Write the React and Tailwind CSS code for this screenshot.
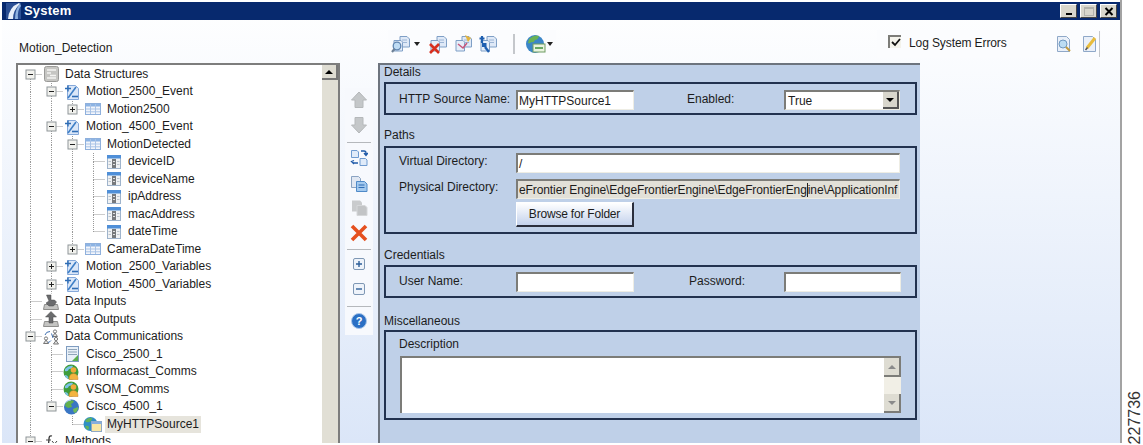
import React from "react";

const Sv = ({ w = 16, h = 16, children, className = "" }) => (
  <svg width={w} height={h} viewBox={`0 0 ${w} ${h}`} className={`shrink-0 ${className}`}>{children}</svg>
);

const DbIcon = () => (
  <Sv>
    <rect x="1.500" y="0.500" width="14" height="15" rx="2" fill="#c6c6c3" stroke="#9a9a98" />
    <path d="M4 4h9M4 7h4M7 9.500h6M4 12h9" stroke="#f4f4f2" strokeWidth="1.400" />
  </Sv>
);
const EventIcon = () => (
  <Sv>
    <path d="M3.500 1.500h8l3 3v11h-11z" fill="#dbe7f8" stroke="#86a9da" />
    <path d="M1 4.500h6M4 1.500v6" stroke="#2f6db5" strokeWidth="1.400" />
    <path d="M4 14L12 3" stroke="#3f7fc6" strokeWidth="1.600" />
    <path d="M8 12.500h6" stroke="#2f6db5" strokeWidth="1.600" />
  </Sv>
);
const TableIcon = () => (
  <Sv>
    <rect x="0.500" y="2.500" width="15" height="11" fill="#f2f5fb" stroke="#8fb0dc" />
    <rect x="1" y="3" width="14" height="2.500" fill="#8db4e4" />
    <path d="M1 8h14M1 10.800h14M5.500 3v10M10.500 3v10" stroke="#a9c3e6" />
  </Sv>
);
const FieldIcon = () => (
  <Sv>
    <rect x="1.500" y="1.500" width="13" height="13" fill="#f0f2f4" stroke="#9fb4cc" />
    <rect x="1" y="1" width="14" height="3.500" fill="#4f8fd8" />
    <rect x="6" y="5" width="4" height="9" fill="#77797c" />
    <path d="M7 7.500h2M7 10.500h2" stroke="#e2e2e2" />
    <path d="M2.500 7.500h2.500M11 7.500h2.500M2.500 10.500h2.500M11 10.500h2.500" stroke="#bcc4cc" />
  </Sv>
);
const TrayIcon = ({ up }) => (
  <Sv>
    <path d="M1.500 10.500h13l1 5H.5z" fill="#c4c4c2" stroke="#8e8e8c" />
    {up ? (
      <path d="M8 .5L2.500 6H6v6h4V6h3.500z" fill="#6a6b6d" stroke="#48494b" strokeWidth="0.500" />
    ) : (
      <path d="M3.500 1h4.500v5H11.500l2 2-3 4H6L3 9l3-2z" fill="#6a6b6d" stroke="#48494b" strokeWidth="0.500" />
    )}
  </Sv>
);
const CommsIcon = () => (
  <Sv w={18} h={16}>
    <circle cx="13" cy="2.500" r="1.600" fill="none" stroke="#777" />
    <path d="M10.500 7.500l2.500-3.500 2.500 3.500z" fill="#e6e6e6" stroke="#777" />
    <circle cx="4" cy="9.500" r="1.600" fill="none" stroke="#777" />
    <path d="M1.500 14.500L4 11l2.500 3.500z" fill="#e6e6e6" stroke="#777" />
    <circle cx="14" cy="10" r="1.600" fill="none" stroke="#777" />
    <path d="M11.500 15l2.500-3.500 2.500 3.500z" fill="#e6e6e6" stroke="#777" />
    <path d="M3 6Q4 2.500 8 2.500M9 11.500q-1 1.500-3 2M9.500 4.500L11 9" stroke="#3f6fb0" fill="none" />
  </Sv>
);
const ServerIcon = () => (
  <Sv>
    <rect x="2.500" y="0.500" width="12" height="15" fill="#e8f0f8" stroke="#7f9cc0" />
    <path d="M4 3.500h9M4 6h9M4 8.500h9" stroke="#8fa4b8" />
    <path d="M8 15l6-6v6z" fill="#5bb04d" />
  </Sv>
);
const PersonGlobe = () => (
  <Sv w={18} h={16}>
    <circle cx="8" cy="8" r="7.500" fill="#3f9c3a" />
    <path d="M2 5q4-4 8-3-1 3-4 3-1 3-4 2z" fill="#7cc2e8" />
    <path d="M1.500 11q4 0 4 4-3-1-4-4z" fill="#7cc2e8" />
    <circle cx="10.500" cy="6" r="2.800" fill="#f0a93a" />
    <path d="M6 15.500q0-6 4.500-6t4.500 6z" fill="#f3b440" stroke="#c87d20" strokeWidth="0.500" />
  </Sv>
);
const GlobeIcon = () => (
  <Sv w={18} h={16}>
    <circle cx="8.500" cy="8" r="7.500" fill="#3a76c4" />
    <path d="M4 2.500q4-2 7-.5-1 3-3 3l1 3-4 1-3-2q0-3 2-4.500z" fill="#62b04e" />
    <path d="M10 10l5-2q0 4-3 6-2-1-2-4z" fill="#6fbb58" />
    <path d="M2 4q3-3 6-3" stroke="#bcdcf5" fill="none" />
  </Sv>
);
const HttpIcon = () => (
  <Sv w={20} h={16}>
    <circle cx="7.500" cy="8" r="7" fill="#2f8fc4" />
    <path d="M2 5q3-4 7-3 0 3-3 4-2 1-4-1z" fill="#63b35a" />
    <path d="M2 10q3-1 4 1 0 2-1 3-2-1-3-4z" fill="#63b35a" />
    <rect x="8.500" y="5.500" width="10" height="10" fill="#f7e6a4" stroke="#8fa8c4" />
    <rect x="8.500" y="5.500" width="10" height="2.500" fill="#86aede" />
  </Sv>
);

const ICONS = {
  db: DbIcon, event: EventIcon, table: TableIcon, field: FieldIcon,
  in: () => <TrayIcon />, out: () => <TrayIcon up />, comms: CommsIcon,
  server: ServerIcon, person: PersonGlobe, globe: GlobeIcon, http: HttpIcon,
  fn: () => (
    <Sv>
      <path d="M9 2Q6 1 6 5L5.500 11Q5 15 2.500 14" stroke="#333" strokeWidth="1.300" fill="none" />
      <path d="M3 6h5M9 7l5 6M14 7l-5 6" stroke="#4a4a4a" fill="none" />
    </Sv>
  ),
};

const Guide = ({ kind }) => {
  const dot = { stroke: "#999999", strokeDasharray: "1 1" };
  const up = kind !== " " && kind !== "m";
  const down = kind === "I" || kind === "T" || kind === "M" || kind === "m" || kind === "P";
  const right = kind !== "I" && kind !== " ";
  const box = kind !== " " && "MmUPp".includes(kind);
  const plus = kind === "P" || kind === "p";
  return (
    <svg width="21" height="17.5" viewBox="0 0 21 17.5" className="shrink-0 overflow-visible">
      {up && <line x1="10.500" y1="0" x2="10.500" y2="9" {...dot} />}
      {down && <line x1="10.500" y1="9" x2="10.500" y2="17.500" {...dot} />}
      {right && <line x1="10.500" y1="8.500" x2="22" y2="8.500" {...dot} />}
      {box && (
        <g>
          <rect x="6" y="4" width="9" height="9" fill="#f2f2ee" stroke="#8f9699" />
          <line x1="8" y1="8.500" x2="13" y2="8.500" stroke="#222" />
          {plus && <line x1="10.500" y1="6" x2="10.500" y2="11" stroke="#222" />}
        </g>
      )}
    </svg>
  );
};

// I = through, T = branch, L = last branch, m = first root minus, M = minus with lines both ways,
// U = minus with line above only, P = plus with lines both ways, p = plus on a last child.
const ROWS = [
  ["m", "db", "Data Structures"],
  ["IM", "event", "Motion_2500_Event"],
  ["IIp", "table", "Motion2500"],
  ["IM", "event", "Motion_4500_Event"],
  ["IIM", "table", "MotionDetected"],
  ["IIIT", "field", "deviceID"],
  ["IIIT", "field", "deviceName"],
  ["IIIT", "field", "ipAddress"],
  ["IIIT", "field", "macAddress"],
  ["IIIL", "field", "dateTime"],
  ["IIp", "table", "CameraDateTime"],
  ["IP", "event", "Motion_2500_Variables"],
  ["IP", "event", "Motion_4500_Variables"],
  ["T", "in", "Data Inputs"],
  ["T", "out", "Data Outputs"],
  ["M", "comms", "Data Communications"],
  ["IT", "server", "Cisco_2500_1"],
  ["IT", "person", "Informacast_Comms"],
  ["IT", "person", "VSOM_Comms"],
  ["IU", "globe", "Cisco_4500_1"],
  ["I L", "http", "MyHTTPSource1", true],
  ["M", "fn", "Methods"],
];

const TreeRow = ({ guides, icon, label, selected }) => {
  const Icon = ICONS[icon];
  return (
    <div className="flex h-[17.5px] items-center">
      {guides.split("").map((g, i) => <Guide key={i} kind={g} />)}
      <span className="ml-[2px] flex w-[16px] justify-center"><Icon /></span>
      <span className={`ml-[4px] px-[2px] leading-[17px] whitespace-nowrap ${selected ? "bg-[#e6e4dc]" : ""}`}>{label}</span>
    </div>
  );
};

const DocPair = ({ variant }) => (
  <Sv w={20} h={20}>
    <path d="M9 2.500h7l2.500 2.500v8H9z" fill="#dfe9f7" stroke="#7f9fc6" />
    <path d="M3 6.500h7l1.500 1.500v9H3z" fill="#e6eef9" stroke="#7f9fc6" />
    <path d="M11 6h5M11 8.500h5" stroke="#9db6d6" />
    {variant === "search" && (
      <g>
        <circle cx="6" cy="12" r="3.800" fill="#bfdcf4" stroke="#5f85b0" strokeWidth="1.300" />
        <path d="M3.500 15L1 18" stroke="#6d8096" strokeWidth="2.200" />
      </g>
    )}
    {variant === "x" && <path d="M2 10l9 9M11 10l-9 9" stroke="#d8301f" strokeWidth="2.600" />}
    {variant === "mail" && (
      <g>
        <path d="M12 1l6 3-3 4z" fill="#e4b53e" />
        <path d="M5 10l5 4 4-5" stroke="#c7567a" strokeWidth="1.500" fill="none" />
      </g>
    )}
    {variant === "arrow" && (
      <g>
        <path d="M1.500 4.500h5M4 2v7" stroke="#1f5fb0" strokeWidth="2.200" />
        <path d="M7 13l4 5" stroke="#1f5fb0" strokeWidth="2.400" />
        <rect x="4" y="9" width="4.500" height="4" fill="#1f5fb0" />
      </g>
    )}
  </Sv>
);

const Caret = () => <span className="h-0 w-0 border-x-[3px] border-t-[4px] border-x-transparent border-t-[#222]" />;

const LinkGlobe = () => (
  <Sv w={21} h={20}>
    <circle cx="10" cy="10" r="9" fill="#3b86c8" />
    <path d="M4 5q5-5 10-3-1 4-4 4-1 3-4 2-1 2-3 1z" fill="#6ab255" />
    <rect x="8" y="10" width="12" height="8" fill="#e9f3df" stroke="#6f9c62" />
    <path d="M10 14h8" stroke="#3c8f3a" strokeWidth="1.500" />
  </Sv>
);

const SideItem = ({ h = "h-[25px]", children }) => (
  <div className={`flex ${h} items-center justify-center`}>{children}</div>
);
const SideSep = ({ className }) => <div className={`mx-[2px] h-[1px] bg-[#b5b8bc] ${className}`} />;

const SideToolbar = () => (
  <div className="ml-[5px] mt-[25px] h-[247px] w-[28px] shrink-0 bg-[#f7f9fd]">
    <SideItem h="h-[23px]">
      <Sv w={18} h={18}><path d="M9 1l7.500 8h-3.500v7.500H5V9H1.500z" fill="#c4c7c9" stroke="#b5b8ba" /></Sv>
    </SideItem>
    <SideItem h="h-[27px]">
      <Sv w={18} h={18}><path d="M9 17l7.500-8h-3.500V1.500H5V9H1.500z" fill="#c4c7c9" stroke="#b5b8ba" /></Sv>
    </SideItem>
    <SideSep className="mt-[4px]" />
    <SideItem h="h-[29px]">
      <Sv w={18} h={18}>
        <path d="M1.500 1.500h5.500l1.500 1.500v5.500h-7z" fill="#e0ebf9" stroke="#6f9bd0" />
        <path d="M10 9.500h5.500l1.500 1.500v5.500h-7z" fill="#e0ebf9" stroke="#6f9bd0" />
        <path d="M11 2h3q2 0 2 2v2M14 4l2 2.500L18 4" stroke="#1f5aa8" strokeWidth="1.300" fill="none" />
        <path d="M8 14H4q-2 0-2-2M4 11.500l-2.500 1L4 15" stroke="#1f5aa8" strokeWidth="1.300" fill="none" />
      </Sv>
    </SideItem>
    <SideItem h="h-[23px]">
      <Sv w={18} h={18}>
        <path d="M1.500 1.500h7l2 2v9h-9z" fill="#e0e7f2" stroke="#8aa3c2" />
        <path d="M6.500 6.500h8l2.500 2.500v7.500H6.500z" fill="#a3c9ee" stroke="#4f8ac8" />
        <path d="M8.500 10h6M8.500 12.500h6" stroke="#2f6db5" />
      </Sv>
    </SideItem>
    <SideItem>
      <Sv w={18} h={18}>
        <path d="M2 1.500h8l2 2v9H2z" fill="#c9cbcd" />
        <path d="M7 6.500h8l2 2v8H7z" fill="#c2c4c6" stroke="#d5d7d9" />
      </Sv>
    </SideItem>
    <SideItem>
      <Sv w={18} h={18}><path d="M2 2l14 14M16 2L2 16" stroke="#e5501f" strokeWidth="3.600" /></Sv>
    </SideItem>
    <SideSep className="mt-[4px]" />
    <SideItem h="h-[27px]">
      <Sv w={14} h={14}>
        <rect x="1.500" y="1.500" width="11" height="11" rx="1.500" fill="#eef3fa" stroke="#7f98b5" />
        <path d="M4 7h6M7 4v6" stroke="#2e5f99" strokeWidth="1.400" />
      </Sv>
    </SideItem>
    <SideItem h="h-[24px]">
      <Sv w={14} h={14}>
        <rect x="1.500" y="1.500" width="11" height="11" rx="1.500" fill="#eef3fa" stroke="#7f98b5" />
        <path d="M4 7h6" stroke="#2e5f99" strokeWidth="1.400" />
      </Sv>
    </SideItem>
    <SideSep className="mt-[5px]" />
    <SideItem h="h-[28px]">
      <svg width="16" height="16" viewBox="0 0 16 16">
        <circle cx="8" cy="8" r="7.500" fill="#2a6fc4" stroke="#a9c6ea" />
        <text x="8" y="12" textAnchor="middle" fontSize="11" fontWeight="700" fill="#fff" fontFamily="Liberation Sans">?</text>
      </svg>
    </SideItem>
  </div>
);

const Field = ({ w, disabled, children }) => (
  <div className={`flex h-[20px] ${w} shrink-0 items-center overflow-hidden whitespace-nowrap border-t-2 border-l-2 border-r border-b border-t-[#7c7c78] border-l-[#7c7c78] border-r-[#eeede4] border-b-[#eeede4] pl-px ${disabled ? "bg-[#e2e0d8]" : "bg-white"}`}>
    {children}
  </div>
);

const GroupLabel = ({ className = "h-[31px] pb-[2px]", children }) => (
  <div className={`flex ${className} items-end leading-[14px]`}>{children}</div>
);
const GroupBox = ({ className = "", children }) => (
  <div className={`w-[533px] border-2 border-[#22324f] ${className}`}>{children}</div>
);

const ScrollBtn = ({ up }) => (
  <div className="flex h-[19px] w-[17px] items-center justify-center border-r-2 border-b-2 border-r-[#7c7c78] border-b-[#7c7c78] bg-[#dedcd2]">
    <span className={`h-0 w-0 border-x-[4px] border-x-transparent ${up ? "border-b-[4px] border-b-[#8a8a8a]" : "border-t-[4px] border-t-[#8a8a8a]"}`} />
  </div>
);

const DetailsPanel = () => (
  <div className="ml-[5px] h-full w-[542px] shrink-0 border-t-2 border-l-2 border-[#6d747e] bg-[#bfd0e8] pl-[4px] text-[#1c1c1c]">
    <GroupLabel className="h-[17px] pb-[3px]">Details</GroupLabel>
    <GroupBox className="h-[33px]">
      <div className="flex items-center pl-[13px] pt-[6px]">
        <span className="w-[117px] pb-[2px] leading-[14px]">HTTP Source Name:</span>
        <Field w="w-[118px]">MyHTTPSource1</Field>
        <span className="ml-[53px] w-[97px] pb-[2px] leading-[14px]">Enabled:</span>
        <Field w="w-[116px]">
          <span className="flex-1 pl-[1px] pt-[1px]">True</span>
          <span className="flex h-[17px] w-[16px] items-center justify-center border-r-2 border-b-2 border-r-[#555] border-b-[#555] bg-[#d8d6cc]">
            <span className="h-0 w-0 border-x-[4px] border-t-[4px] border-x-transparent border-t-black" />
          </span>
        </Field>
      </div>
    </GroupBox>

    <GroupLabel className="h-[31px] pb-[4px]">Paths</GroupLabel>
    <GroupBox className="h-[88px]">
      <div className="flex items-center pl-[13px] pt-[5px]">
        <span className="w-[117px] pb-[4px] leading-[14px]">Virtual Directory:</span>
        <Field w="w-[384px]">/</Field>
      </div>
      <div className="mt-[6px] flex items-center pl-[13px]">
        <span className="w-[117px] pb-[4px] leading-[14px]">Physical Directory:</span>
        <Field w="w-[384px]" disabled>
          <span className="tracking-[-0.1px]">eFrontier Engine\EdgeFrontierEngine\EdgeFrontierEng</span>
          <span className="h-[14px] w-px shrink-0 bg-[#222]" />
          <span className="tracking-[-0.1px]">ine\ApplicationInf</span>
        </Field>
      </div>
      <div className="mt-[3px] pl-[130px]">
        <button className="h-[25px] w-[118px] border-r-2 border-b-2 border-t border-l border-t-white border-l-white border-r-[#2a2e3c] border-b-[#2a2e3c] bg-linear-to-b from-white to-[#c4d2ec] text-[12px] tracking-[-0.2px] text-[#1c1c1c]">
          Browse for Folder
        </button>
      </div>
    </GroupBox>

    <GroupLabel className="h-[31px] pb-[3px]">Credentials</GroupLabel>
    <GroupBox className="h-[33px]">
      <div className="flex items-center pl-[13px] pt-[5px]">
        <span className="w-[117px] pb-[2px] leading-[14px]">User Name:</span>
        <Field w="w-[118px]" />
        <span className="ml-[55px] w-[95px] pb-[2px] leading-[14px]">Password:</span>
        <Field w="w-[117px]" />
      </div>
    </GroupBox>

    <GroupLabel className="h-[32px] pb-[2px]">Miscellaneous</GroupLabel>
    <GroupBox className="h-[90px]">
      <div className="flex h-[24px] items-center pl-[13px]">Description</div>
      <div className="ml-[14px] flex h-[57px] w-[501px] border-t-2 border-l-2 border-[#7c7c78] bg-white">
        <div className="flex-1" />
        <div className="flex w-[17px] flex-col justify-between bg-[#f1efe6]">
          <ScrollBtn up />
          <ScrollBtn />
        </div>
      </div>
    </GroupBox>
  </div>
);

const WinBtn = ({ children, faded }) => (
  <div className={`flex h-[14px] w-[17px] items-center justify-center border-r border-b border-r-[#444] border-b-[#444] border-t border-l border-t-white border-l-white bg-[#d8d6cc] ${faded ? "text-[#a9a9a9]" : "text-black"}`}>
    {children}
  </div>
);

export default function App() {
  return (
    <div className="relative flex h-[445px] w-[1143px] overflow-hidden bg-white font-['Liberation_Sans',sans-serif] text-[12px] text-[#1c1c1c]">
      <div className="ml-[2px] flex h-[443px] w-[1120px] shrink-0 flex-col border-r-2 border-[#a3a3a3] bg-linear-to-b from-white to-[#dbe6f8]">
        {/* title bar */}
        <div className="mt-[2px] flex h-[18px] shrink-0 items-center bg-[#07296e] pl-[3px] pr-[3px]">
          <Sv w={17} h={18}>
            <path d="M1 1h15v16H1z" fill="#2b4f94" />
            <path d="M14 1Q4 5 3 17h5q0-9 7-15z" fill="#e8eff9" />
            <path d="M15 2q-5 5-5 15h3q-1-9 3-13z" fill="#8fb2e0" />
          </Sv>
          <span className="ml-[2px] text-[13px] font-bold tracking-[0.2px] text-white">System</span>
          <div className="ml-auto flex gap-[3px]">
            <WinBtn><span className="mt-[6px] h-[2px] w-[6px] bg-black" /></WinBtn>
            <WinBtn faded><span className="h-[9px] w-[10px] border border-t-2 border-[#b2b2ac]" /></WinBtn>
            <WinBtn>
              <Sv w={10} h={9}><path d="M1.500 1l7 7M8.500 1l-7 7" stroke="#000" strokeWidth="2" /></Sv>
            </WinBtn>
          </div>
        </div>

        {/* top strip */}
        <div className="flex h-[43px] shrink-0 items-start">
          <div className="mt-[21px] w-[386px] shrink-0 pl-[17px] leading-[15px]">Motion_Detection</div>
          <div className="mt-[10px] flex h-[28px] w-[168px] shrink-0 items-center bg-[#fbfcfe] pl-[3px]">
            <DocPair variant="search" />
            <span className="ml-[3px] flex"><Caret /></span>
            <span className="ml-[8px]"><DocPair variant="x" /></span>
            <span className="ml-[5px]"><DocPair variant="mail" /></span>
            <span className="ml-[5px]"><DocPair variant="arrow" /></span>
            <span className="ml-[15px] h-[20px] w-[2px] bg-[#c4c7cb]" />
            <span className="ml-[10px]"><LinkGlobe /></span>
            <span className="ml-[1px] flex"><Caret /></span>
          </div>
          <div className="ml-[321px] mt-[10px] flex h-[28px] w-[224px] shrink-0 items-center bg-[#fbfcfe] pl-[11px]">
            <span className="mb-[5px] flex h-[13px] w-[13px] items-center justify-center border-t-2 border-l-2 border-[#7c7c78] bg-[#f4f3ec]">
              <Sv w={10} h={9}><path d="M1 4l3 3 5-6" stroke="#111" strokeWidth="1.800" fill="none" /></Sv>
            </span>
            <span className="mb-[2px] ml-[8px] whitespace-nowrap tracking-[-0.1px]">Log System Errors</span>
            <span className="ml-auto flex items-center">
              <Sv w={18} h={18}>
                <path d="M2.500 1.500h9l3 3v12h-12z" fill="#eaf0f9" stroke="#8fa8c8" />
                <circle cx="8" cy="9" r="4" fill="#bcdcf2" stroke="#6f98c0" />
                <path d="M11 12l4 4" stroke="#c29a3c" strokeWidth="2" />
              </Sv>
              <span className="ml-[8px]">
                <Sv w={18} h={18}>
                  <path d="M2.500 1.500h9l3 3v12h-12z" fill="#eaf0f9" stroke="#8fa8c8" />
                  <path d="M6 13L14 3" stroke="#e8bc3c" strokeWidth="3" />
                  <path d="M4.500 15L6.500 12.500" stroke="#555" strokeWidth="1.500" />
                </Sv>
              </span>
              <span className="mr-px h-[26px] w-px bg-[#c4c7cb]" />
            </span>
          </div>
        </div>

        {/* main row */}
        <div className="flex min-h-0 flex-1">
          <div className="ml-[14px] flex h-full w-[324px] shrink-0 border-t-2 border-x-2 border-[#7d7d7d] bg-white">
            <div className="min-w-0 flex-1 overflow-hidden pl-[2px] pt-[0.5px]">
              {ROWS.map(([g, i, l, s]) => <TreeRow key={l} guides={g} icon={i} label={l} selected={s} />)}
            </div>
            <div className="w-[16px] shrink-0 bg-[#e1dfd5]">
              <div className="flex h-[15px] items-center justify-center border-r-2 border-b-2 border-r-[#777] border-b-[#777] bg-[#dedcd2]">
                <span className="h-0 w-0 border-x-[4px] border-b-[4px] border-x-transparent border-b-black" />
              </div>
            </div>
          </div>
          <SideToolbar />
          <DetailsPanel />
        </div>
      </div>
      <div className="flex flex-1 items-end justify-center pb-[1px] pl-[5px]">
        <span className="rotate-180 text-[16px] leading-[16px] text-[#333] [writing-mode:vertical-rl]">227736</span>
      </div>
    </div>
  );
}
